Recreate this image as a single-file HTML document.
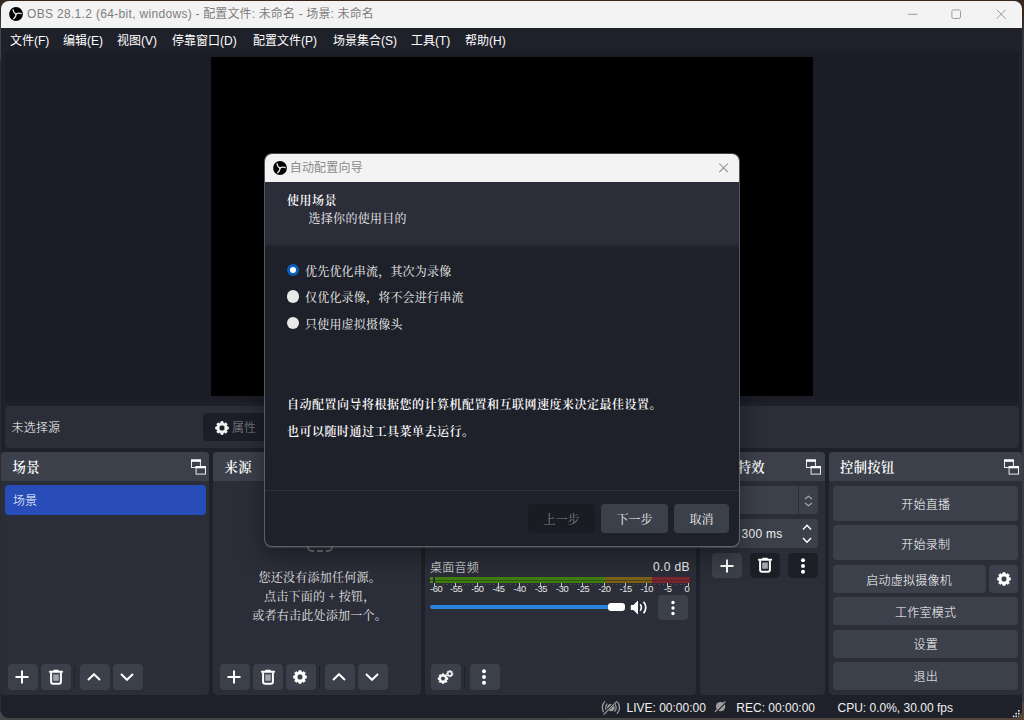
<!DOCTYPE html>
<html lang="zh-CN">
<head>
<meta charset="utf-8">
<title>OBS 28.1.2</title>
<style>
*{box-sizing:border-box;margin:0;padding:0}
html,body{width:1024px;height:720px;overflow:hidden;background:linear-gradient(to right,#464649 0%,#464649 55%,#57463a 100%)}
#bgt{position:absolute;left:0;top:0;width:1024px;height:12px;background:#38271d}
#bgl{position:absolute;left:0;top:12px;width:6px;height:700px;background:linear-gradient(to bottom,#38271d 0,#444446 16px,#444446 44px,#2b2c32 50px,#2b2c32 100%)}
#bgr{position:absolute;left:1016px;top:12px;width:8px;height:690px;background:linear-gradient(to bottom,#38271d 0,#3a3a40 30px,#3a3a40 100%)}
body{font-family:"Liberation Sans","Noto Sans CJK SC",sans-serif;font-size:12px;color:#fff;position:relative}
.abs{position:absolute}
.song{font-family:"Liberation Serif","Noto Serif CJK SC",serif}
#win{position:absolute;left:1px;top:1px;width:1021.2px;height:716.8px;border-radius:8px;background:#1f212a;overflow:hidden}
#central{position:absolute;left:4px;top:50px;width:1014px;height:351px;background:#1b1c26}
#titlebar{position:absolute;left:0;top:0;width:100%;height:27px;background:#f3f3f3;color:#7d7d7d}
#titlebar .t{position:absolute;left:26px;top:5px;font-size:12px;line-height:16px;white-space:nowrap;letter-spacing:.15px}
#titlebar .t i{font-style:normal;letter-spacing:.32px}
#menubar{position:absolute;left:0;top:27px;width:100%;height:23px;background:#1f212a}
#menubar span{position:absolute;top:5px;line-height:16px;font-size:12px;white-space:nowrap}
#preview{position:absolute;left:210px;top:56px;width:602px;height:339px;background:#000}
#srcbar{position:absolute;left:4px;top:405px;width:1014px;height:42px;background:#2b2e38;border-radius:4px}
.dock{position:absolute;top:451px;height:242.7px;background:#2b2e38;border-radius:4px;overflow:hidden}
.dock .hd{position:absolute;left:0;top:0;width:100%;height:29px;background:#3c404b}
.dock .hd b{position:absolute;left:11.5px;top:7px;font-size:13.33px;line-height:17px;font-weight:600;letter-spacing:.3px;white-space:nowrap}
.lt{font-weight:300}
.btn{position:absolute;background:#3c404b;border-radius:4px;text-align:center;font-size:12px;white-space:nowrap}
.ib{position:absolute;background:#3c404b;border-radius:4px;width:29.7px;height:25.8px;top:663.3px}
.sep{position:absolute;width:1.2px;background:#1f212a;top:666px;height:20px}
.ml{font-size:9.3px;line-height:10px;top:582.9px;color:#e6e6e6;letter-spacing:-.35px;white-space:nowrap}
#status{position:absolute;left:0;top:693.6px;width:100%;height:24px;background:#1f212a}
#status span{position:absolute;top:5px;line-height:16px;font-size:12px;white-space:nowrap;color:#f0f0f0}
#dlg{position:absolute;left:264px;top:153px;width:474px;height:392px;border-radius:7px;background:#1f212a;overflow:hidden;box-shadow:0 0 0 1px rgba(112,115,124,.6),0 1px 0 1px rgba(112,115,124,.35),0 8px 24px 2px rgba(0,0,0,.38)}
#dlg .rt{position:absolute;left:40px;font-size:12px;line-height:16px;letter-spacing:.2px;white-space:nowrap;color:#f2f2f2}
#dlg .bt{position:absolute;left:22px;font-size:12px;line-height:16px;font-weight:600;letter-spacing:.5px;white-space:nowrap}
.radio{position:absolute;left:21.6px;width:12.4px;height:12.4px;border-radius:50%;background:#e9e9e9}
.radio.on{background:#fff;border:3.7px solid #0a5fbd}
</style>
</head>
<body>
<div id="bgt"></div><div id="bgl"></div><div id="bgr"></div>
<div id="win">
  <div id="titlebar">
    <svg class="abs" style="left:7.8px;top:5.7px" width="14" height="14" viewBox="-7.0 -7.0 14 14"><circle cx="0" cy="0" r="6.9" fill="#000"/><g transform="scale(1.0)"><path d="M0.2,0.2 Q-2.9,-1.5 -2.9,-4.5" stroke="#e4e4e4" stroke-width="1.2" fill="none" stroke-linecap="round"/><g transform="rotate(120)"><path d="M0.2,0.2 Q-2.9,-1.5 -2.9,-4.5" stroke="#e4e4e4" stroke-width="1.2" fill="none" stroke-linecap="round"/></g><g transform="rotate(240)"><path d="M0.2,0.2 Q-2.9,-1.5 -2.9,-4.5" stroke="#e4e4e4" stroke-width="1.2" fill="none" stroke-linecap="round"/></g></g></svg>
    <div class="t"><i>OBS 28.1.2 (64-bit, windows)</i> - 配置文件: 未命名 - 场景: 未命名</div>
    <svg class="abs" style="left:906px;top:12px" width="12" height="3" viewBox="0 0 12 3"><path d="M1 1.3h9.4" stroke="#9c9c9c" stroke-width="1"/></svg>
    <svg class="abs" style="left:949px;top:7px" width="12" height="12" viewBox="0 0 12 12"><rect x="1.9" y="1.9" width="8.6" height="8.6" rx="1.6" fill="none" stroke="#9c9c9c" stroke-width="1"/></svg>
    <svg class="abs" style="left:994px;top:7px" width="12" height="12" viewBox="0 0 12 12"><path d="M1.6 1.6l9.2 9.2M10.8 1.6l-9.2 9.2" stroke="#9c9c9c" stroke-width="1"/></svg>
  </div>
  <div id="menubar">
    <span style="left:9px">文件(F)</span>
    <span style="left:62px">编辑(E)</span>
    <span style="left:116px">视图(V)</span>
    <span style="left:171px">停靠窗口(D)</span>
    <span style="left:252px">配置文件(P)</span>
    <span style="left:332px">场景集合(S)</span>
    <span style="left:410px">工具(T)</span>
    <span style="left:464px">帮助(H)</span>
  </div>
  <div id="central"></div>
  <div id="preview"></div>
  <div id="srcbar">
    <span class="abs lt" style="left:6.5px;top:14px;line-height:16px;letter-spacing:.2px">未选择源</span>
    <div class="abs" style="left:197.8px;top:7px;width:80px;height:28px;background:#1c1e27;border-radius:4px"></div>
    <svg class="abs" style="left:210px;top:14.8px" width="14" height="14" viewBox="0 0 14 14"><path fill="#f4f4f4" fill-rule="evenodd" stroke="#f4f4f4" stroke-width="0.6" stroke-linejoin="round" d="M5.61,1.91 L5.97,0.48 L8.03,0.48 L8.39,1.91 L9.62,2.41 L10.88,1.66 L12.34,3.12 L11.59,4.38 L12.09,5.61 L13.52,5.97 L13.52,8.03 L12.09,8.39 L11.59,9.62 L12.34,10.88 L10.88,12.34 L9.62,11.59 L8.39,12.09 L8.03,13.52 L5.97,13.52 L5.61,12.09 L4.38,11.59 L3.12,12.34 L1.66,10.88 L2.41,9.62 L1.91,8.39 L0.48,8.03 L0.48,5.97 L1.91,5.61 L2.41,4.38 L1.66,3.12 L3.12,1.66 L4.38,2.41Z M4.10,7.00 a2.90,2.90 0 1,0 5.80,0 a2.90,2.90 0 1,0 -5.80,0Z"/></svg>
    <span class="abs lt" style="left:227px;top:14px;line-height:16px;color:#8b8d93">属性</span>
  </div>

  <div class="dock" style="left:0px;width:208.4px"><div class="hd"><b class="song">场景</b><svg class="abs" style="left:190px;top:7.4px" width="16" height="17" viewBox="0 0 16 17"><rect x="0.5" y="1" width="8.9" height="7.5" fill="none" stroke="#ececee" stroke-width="1"/><rect x="0" y="0.5" width="9.9" height="2.3" fill="#fff"/><rect x="4.6" y="7.1" width="10.4" height="8.5" fill="#3c404b"/><rect x="5.1" y="7.6" width="9.4" height="7.5" fill="none" stroke="#ececee" stroke-width="1"/><rect x="4.6" y="7.1" width="10.4" height="2.2" fill="#fff"/></svg></div>
    <div class="abs" style="left:4px;top:32.8px;width:200.6px;height:30px;background:#284cb8;border-radius:4px"></div>
    <span class="abs lt" style="left:12px;top:41px;line-height:16px">场景</span>
  </div>
  <div class="dock" style="left:212px;width:207.5px"><div class="hd"><b class="song">来源</b></div>
    <div class="abs song" style="left:0;top:117.3px;width:100%;padding-left:6px;text-align:center;line-height:19px;font-size:12px;letter-spacing:.25px;color:#e4e4e4">您还没有添加任何源。<br>点击下面的 + 按钮，<br>或者右击此处添加一个。</div>
    <svg class="abs" style="left:94px;top:91px" width="26" height="10" viewBox="0 0 26 10"><path d="M1 1v3a4 4 0 0 0 4 4h2M25 1v3a4 4 0 0 1-4 4h-2M10 8h6" stroke="#8a8c92" stroke-width="1.4" fill="none"/></svg>
  </div>
  <div class="dock" style="left:423.8px;width:271.2px"><div class="hd"><b class="song">混音器</b></div></div>
  <div class="dock" style="left:699px;width:125px"><div class="hd"><b class="song" style="left:auto;right:60px">转场特效</b><svg class="abs" style="left:106px;top:7.4px" width="16" height="17" viewBox="0 0 16 17"><rect x="0.5" y="1" width="8.9" height="7.5" fill="none" stroke="#ececee" stroke-width="1"/><rect x="0" y="0.5" width="9.9" height="2.3" fill="#fff"/><rect x="4.6" y="7.1" width="10.4" height="8.5" fill="#3c404b"/><rect x="5.1" y="7.6" width="9.4" height="7.5" fill="none" stroke="#ececee" stroke-width="1"/><rect x="4.6" y="7.1" width="10.4" height="2.2" fill="#fff"/></svg></div>
    <div class="abs" style="left:4px;top:34.2px;width:114px;height:27.5px;background:#3c404b;border-radius:4px"></div>
    <div class="abs" style="left:98px;top:34.2px;width:1.2px;height:27.5px;background:#2b2e38"></div>
    <div class="abs" style="left:4px;top:67px;width:114px;height:29px;background:#3c404b;border-radius:4px"></div>
    <span class="abs" style="left:41.5px;top:74px;line-height:16px;font-size:12px;letter-spacing:.3px;color:#f0f0f0">300 ms</span>
    <svg class="abs" style="left:104px;top:43.3px" width="9" height="5" viewBox="0 0 9 5"><path d="M1 4L4.5 1.2L8 4" stroke="#a4a6ad" stroke-width="1.1" fill="none"/></svg><svg class="abs" style="left:104px;top:50px" width="9" height="5" viewBox="0 0 9 5"><path d="M1 1L4.5 3.8L8 1" stroke="#a4a6ad" stroke-width="1.1" fill="none"/></svg>
    <svg class="abs" style="left:102px;top:72px" width="10" height="6.5" viewBox="0 0 10 6.5"><path d="M1 5.5L5.0 1.2L9 5.5" stroke="#fff" stroke-width="1.4" fill="none"/></svg><svg class="abs" style="left:102px;top:85px" width="10" height="6.5" viewBox="0 0 10 6.5"><path d="M1 1L5.0 5.3L9 1" stroke="#fff" stroke-width="1.4" fill="none"/></svg>
    <div class="abs" style="left:11.7px;top:101.4px;width:30.3px;height:24.5px;background:#3c404b;border-radius:4px"></div>
    <div class="abs" style="left:49.9px;top:101.4px;width:29.8px;height:24.5px;background:#1d1f27;border-radius:4px"></div>
    <div class="abs" style="left:87.6px;top:101.4px;width:30.4px;height:24.5px;background:#1d1f27;border-radius:4px"></div>
    <svg class="abs" style="left:20px;top:106.7px" width="14" height="14" viewBox="0 0 14 14"><path d="M7 0.5v13M0.5 7h13" stroke="#fff" stroke-width="2" fill="none"/></svg><svg class="abs" style="left:57px;top:104.6px" width="16" height="17" viewBox="0 0 16 17"><path d="M1.8 2.75h12.4" stroke="#fff" stroke-width="1.9" stroke-linecap="round" fill="none"/><rect x="5.2" y="0.7" width="5.6" height="1.6" rx="0.8" fill="#fff"/><path d="M3.1 3.5v9.3a2 2 0 0 0 2 2h5.8a2 2 0 0 0 2-2v-9.3" stroke="#fff" stroke-width="2" fill="none"/><rect x="5.1" y="5.5" width="5.8" height="6.2" fill="#94969c"/><path d="M7 5.6v6.3M9 5.6v6.3" stroke="#b4b5ba" stroke-width="0.9"/></svg><svg class="abs" style="left:100px;top:104.7px" width="6" height="18" viewBox="0 0 6 18"><circle cx="3" cy="3.3" r="2.0" fill="#fff"/><circle cx="3" cy="9" r="2.0" fill="#fff"/><circle cx="3" cy="14.7" r="2.0" fill="#fff"/></svg>
  </div>
  <div class="dock" style="left:827.5px;width:193.5px"><div class="hd"><b class="song">控制按钮</b><svg class="abs" style="left:175.6px;top:7.4px" width="16" height="17" viewBox="0 0 16 17"><rect x="0.5" y="1" width="8.9" height="7.5" fill="none" stroke="#ececee" stroke-width="1"/><rect x="0" y="0.5" width="9.9" height="2.3" fill="#fff"/><rect x="4.6" y="7.1" width="10.4" height="8.5" fill="#3c404b"/><rect x="5.1" y="7.6" width="9.4" height="7.5" fill="none" stroke="#ececee" stroke-width="1"/><rect x="4.6" y="7.1" width="10.4" height="2.2" fill="#fff"/></svg></div></div>

  <!-- scenes buttons -->
  <div class="ib" style="left:7px"></div><div class="ib" style="left:40px"></div><div class="sep" style="left:72.8px"></div><div class="ib" style="left:79px"></div><div class="ib" style="left:112px"></div>
  <svg class="abs" style="left:14.3px;top:669.3px" width="14" height="14" viewBox="0 0 14 14"><path d="M7 0.5v13M0.5 7h13" stroke="#fff" stroke-width="2" fill="none"/></svg><svg class="abs" style="left:47.3px;top:667.6px" width="16" height="17" viewBox="0 0 16 17"><path d="M1.8 2.75h12.4" stroke="#fff" stroke-width="1.9" stroke-linecap="round" fill="none"/><rect x="5.2" y="0.7" width="5.6" height="1.6" rx="0.8" fill="#fff"/><path d="M3.1 3.5v9.3a2 2 0 0 0 2 2h5.8a2 2 0 0 0 2-2v-9.3" stroke="#fff" stroke-width="2" fill="none"/><rect x="5.1" y="5.5" width="5.8" height="6.2" fill="#94969c"/><path d="M7 5.6v6.3M9 5.6v6.3" stroke="#b4b5ba" stroke-width="0.9"/></svg><svg class="abs" style="left:86.3px;top:672.3px" width="14" height="8" viewBox="0 0 14 8"><path d="M1 7L7.0 1.2L13 7" stroke="#fff" stroke-width="2" fill="none"/></svg><svg class="abs" style="left:119.3px;top:671.8px" width="14" height="8" viewBox="0 0 14 8"><path d="M1 1L7.0 6.8L13 1" stroke="#fff" stroke-width="2" fill="none"/></svg>
  <!-- sources buttons -->
  <div class="ib" style="left:219px"></div><div class="ib" style="left:252px"></div><div class="ib" style="left:285px"></div><div class="sep" style="left:317.5px"></div><div class="ib" style="left:324px"></div><div class="ib" style="left:357px"></div>
  <svg class="abs" style="left:226.3px;top:669.3px" width="14" height="14" viewBox="0 0 14 14"><path d="M7 0.5v13M0.5 7h13" stroke="#fff" stroke-width="2" fill="none"/></svg><svg class="abs" style="left:259.3px;top:667.6px" width="16" height="17" viewBox="0 0 16 17"><path d="M1.8 2.75h12.4" stroke="#fff" stroke-width="1.9" stroke-linecap="round" fill="none"/><rect x="5.2" y="0.7" width="5.6" height="1.6" rx="0.8" fill="#fff"/><path d="M3.1 3.5v9.3a2 2 0 0 0 2 2h5.8a2 2 0 0 0 2-2v-9.3" stroke="#fff" stroke-width="2" fill="none"/><rect x="5.1" y="5.5" width="5.8" height="6.2" fill="#94969c"/><path d="M7 5.6v6.3M9 5.6v6.3" stroke="#b4b5ba" stroke-width="0.9"/></svg><svg class="abs" style="left:292.3px;top:669px" width="14" height="14" viewBox="0 0 14 14"><path fill="#fff" fill-rule="evenodd" stroke="#fff" stroke-width="0.6" stroke-linejoin="round" d="M5.59,1.83 L5.95,0.38 L8.05,0.38 L8.41,1.83 L9.66,2.34 L10.94,1.58 L12.42,3.06 L11.66,4.34 L12.17,5.59 L13.62,5.95 L13.62,8.05 L12.17,8.41 L11.66,9.66 L12.42,10.94 L10.94,12.42 L9.66,11.66 L8.41,12.17 L8.05,13.62 L5.95,13.62 L5.59,12.17 L4.34,11.66 L3.06,12.42 L1.58,10.94 L2.34,9.66 L1.83,8.41 L0.38,8.05 L0.38,5.95 L1.83,5.59 L2.34,4.34 L1.58,3.06 L3.06,1.58 L4.34,2.34Z M4.10,7.00 a2.90,2.90 0 1,0 5.80,0 a2.90,2.90 0 1,0 -5.80,0Z"/></svg><svg class="abs" style="left:331.3px;top:672.3px" width="14" height="8" viewBox="0 0 14 8"><path d="M1 7L7.0 1.2L13 7" stroke="#fff" stroke-width="2" fill="none"/></svg><svg class="abs" style="left:364.3px;top:671.8px" width="14" height="8" viewBox="0 0 14 8"><path d="M1 1L7.0 6.8L13 1" stroke="#fff" stroke-width="2" fill="none"/></svg>
  <!-- mixer -->
  <span class="abs lt" style="left:429px;top:558.5px;line-height:16px;letter-spacing:.25px;color:#f0f0f0">桌面音频</span>
  <span class="abs" style="left:630px;width:59px;text-align:right;top:557.5px;line-height:16px;letter-spacing:.4px;color:#f0f0f0">0.0 dB</span>
  <div class="abs" style="left:429.2px;top:575.5px;width:2.8px;height:6.5px;background:linear-gradient(to bottom,#4a8a14 0,#4a8a14 2.6px,#2c4d1c 2.6px,#2c4d1c 3.9px,#4a8a14 3.9px,#4a8a14 6.5px)"></div>
<div class="abs" style="left:433.7px;top:575.5px;width:170.5px;height:6.5px;background:linear-gradient(to bottom,#417c0e 0,#417c0e 2.6px,#2f5a19 2.6px,#2f5a19 3.9px,#417c0e 3.9px,#417c0e 6.5px)"></div>
<div class="abs" style="left:604.2px;top:575.5px;width:46.8px;height:6.5px;background:linear-gradient(to bottom,#7a6114 0,#7a6114 2.6px,#4f4224 2.6px,#4f4224 3.9px,#7a6114 3.9px,#7a6114 6.5px)"></div>
<div class="abs" style="left:651.0px;top:575.5px;width:38.3px;height:6.5px;background:linear-gradient(to bottom,#7d2630 0,#7d2630 2.6px,#50252f 2.6px,#50252f 3.9px,#7d2630 3.9px,#7d2630 6.5px)"></div>
<div class="abs" style="left:433.1px;top:582px;width:1px;height:2.6px;background:#c4c4c4"></div>
<div class="abs" style="left:437.3px;top:582.5px;width:1px;height:1px;background:#555862"></div>
<div class="abs" style="left:441.6px;top:582.5px;width:1px;height:1px;background:#555862"></div>
<div class="abs" style="left:445.8px;top:582.5px;width:1px;height:1px;background:#555862"></div>
<div class="abs" style="left:450.0px;top:582.5px;width:1px;height:1px;background:#555862"></div>
<div class="abs" style="left:454.3px;top:582px;width:1px;height:2.6px;background:#c4c4c4"></div>
<div class="abs" style="left:458.5px;top:582.5px;width:1px;height:1px;background:#555862"></div>
<div class="abs" style="left:462.7px;top:582.5px;width:1px;height:1px;background:#555862"></div>
<div class="abs" style="left:467.0px;top:582.5px;width:1px;height:1px;background:#555862"></div>
<div class="abs" style="left:471.2px;top:582.5px;width:1px;height:1px;background:#555862"></div>
<div class="abs" style="left:475.5px;top:582px;width:1px;height:2.6px;background:#c4c4c4"></div>
<div class="abs" style="left:479.7px;top:582.5px;width:1px;height:1px;background:#555862"></div>
<div class="abs" style="left:483.9px;top:582.5px;width:1px;height:1px;background:#555862"></div>
<div class="abs" style="left:488.2px;top:582.5px;width:1px;height:1px;background:#555862"></div>
<div class="abs" style="left:492.4px;top:582.5px;width:1px;height:1px;background:#555862"></div>
<div class="abs" style="left:496.6px;top:582px;width:1px;height:2.6px;background:#c4c4c4"></div>
<div class="abs" style="left:500.9px;top:582.5px;width:1px;height:1px;background:#555862"></div>
<div class="abs" style="left:505.1px;top:582.5px;width:1px;height:1px;background:#555862"></div>
<div class="abs" style="left:509.3px;top:582.5px;width:1px;height:1px;background:#555862"></div>
<div class="abs" style="left:513.6px;top:582.5px;width:1px;height:1px;background:#555862"></div>
<div class="abs" style="left:517.8px;top:582px;width:1px;height:2.6px;background:#c4c4c4"></div>
<div class="abs" style="left:522.0px;top:582.5px;width:1px;height:1px;background:#555862"></div>
<div class="abs" style="left:526.3px;top:582.5px;width:1px;height:1px;background:#555862"></div>
<div class="abs" style="left:530.5px;top:582.5px;width:1px;height:1px;background:#555862"></div>
<div class="abs" style="left:534.7px;top:582.5px;width:1px;height:1px;background:#555862"></div>
<div class="abs" style="left:539.0px;top:582px;width:1px;height:2.6px;background:#c4c4c4"></div>
<div class="abs" style="left:543.2px;top:582.5px;width:1px;height:1px;background:#555862"></div>
<div class="abs" style="left:547.4px;top:582.5px;width:1px;height:1px;background:#555862"></div>
<div class="abs" style="left:551.7px;top:582.5px;width:1px;height:1px;background:#555862"></div>
<div class="abs" style="left:555.9px;top:582.5px;width:1px;height:1px;background:#555862"></div>
<div class="abs" style="left:560.2px;top:582px;width:1px;height:2.6px;background:#c4c4c4"></div>
<div class="abs" style="left:564.4px;top:582.5px;width:1px;height:1px;background:#555862"></div>
<div class="abs" style="left:568.6px;top:582.5px;width:1px;height:1px;background:#555862"></div>
<div class="abs" style="left:572.9px;top:582.5px;width:1px;height:1px;background:#555862"></div>
<div class="abs" style="left:577.1px;top:582.5px;width:1px;height:1px;background:#555862"></div>
<div class="abs" style="left:581.3px;top:582px;width:1px;height:2.6px;background:#c4c4c4"></div>
<div class="abs" style="left:585.6px;top:582.5px;width:1px;height:1px;background:#555862"></div>
<div class="abs" style="left:589.8px;top:582.5px;width:1px;height:1px;background:#555862"></div>
<div class="abs" style="left:594.0px;top:582.5px;width:1px;height:1px;background:#555862"></div>
<div class="abs" style="left:598.3px;top:582.5px;width:1px;height:1px;background:#555862"></div>
<div class="abs" style="left:602.5px;top:582px;width:1px;height:2.6px;background:#c4c4c4"></div>
<div class="abs" style="left:606.7px;top:582.5px;width:1px;height:1px;background:#555862"></div>
<div class="abs" style="left:611.0px;top:582.5px;width:1px;height:1px;background:#555862"></div>
<div class="abs" style="left:615.2px;top:582.5px;width:1px;height:1px;background:#555862"></div>
<div class="abs" style="left:619.4px;top:582.5px;width:1px;height:1px;background:#555862"></div>
<div class="abs" style="left:623.7px;top:582px;width:1px;height:2.6px;background:#c4c4c4"></div>
<div class="abs" style="left:627.9px;top:582.5px;width:1px;height:1px;background:#555862"></div>
<div class="abs" style="left:632.1px;top:582.5px;width:1px;height:1px;background:#555862"></div>
<div class="abs" style="left:636.4px;top:582.5px;width:1px;height:1px;background:#555862"></div>
<div class="abs" style="left:640.6px;top:582.5px;width:1px;height:1px;background:#555862"></div>
<div class="abs" style="left:644.9px;top:582px;width:1px;height:2.6px;background:#c4c4c4"></div>
<div class="abs" style="left:649.1px;top:582.5px;width:1px;height:1px;background:#555862"></div>
<div class="abs" style="left:653.3px;top:582.5px;width:1px;height:1px;background:#555862"></div>
<div class="abs" style="left:657.6px;top:582.5px;width:1px;height:1px;background:#555862"></div>
<div class="abs" style="left:661.8px;top:582.5px;width:1px;height:1px;background:#555862"></div>
<div class="abs" style="left:666.0px;top:582px;width:1px;height:2.6px;background:#c4c4c4"></div>
<div class="abs" style="left:670.3px;top:582.5px;width:1px;height:1px;background:#555862"></div>
<div class="abs" style="left:674.5px;top:582.5px;width:1px;height:1px;background:#555862"></div>
<div class="abs" style="left:678.7px;top:582.5px;width:1px;height:1px;background:#555862"></div>
<div class="abs" style="left:683.0px;top:582.5px;width:1px;height:1px;background:#555862"></div>
<div class="abs" style="left:687.2px;top:582px;width:1px;height:2.6px;background:#c4c4c4"></div>
<span class="abs ml" style="left:429px">-60</span>
<span class="abs ml" style="left:445.2px;width:20px;text-align:center">-55</span>
<span class="abs ml" style="left:466.4px;width:20px;text-align:center">-50</span>
<span class="abs ml" style="left:487.5px;width:20px;text-align:center">-45</span>
<span class="abs ml" style="left:508.7px;width:20px;text-align:center">-40</span>
<span class="abs ml" style="left:529.9px;width:20px;text-align:center">-35</span>
<span class="abs ml" style="left:551.1px;width:20px;text-align:center">-30</span>
<span class="abs ml" style="left:572.2px;width:20px;text-align:center">-25</span>
<span class="abs ml" style="left:593.4px;width:20px;text-align:center">-20</span>
<span class="abs ml" style="left:614.6px;width:20px;text-align:center">-15</span>
<span class="abs ml" style="left:635.8px;width:20px;text-align:center">-10</span>
<span class="abs ml" style="left:656.9px;width:20px;text-align:center">-5</span>
<span class="abs ml" style="left:675.3px;width:13px;text-align:right">0</span>
  <div class="abs" style="left:429.3px;top:604px;width:185px;height:4px;border-radius:2px;background:#2b83dc"></div>
  <div class="abs" style="left:606.8px;top:601.5px;width:17.3px;height:8.7px;border-radius:3px;background:#fff"></div>
  <svg class="abs" style="left:629px;top:597.7px" width="18" height="17" viewBox="0 0 18 17"><path d="M0.8 6h2.6L8 1.5v14L3.4 11H0.8z" fill="#fff"/><path d="M10.2 5.3Q12.6 8.5 10.2 11.7" stroke="#fff" stroke-width="1.6" fill="none"/><path d="M13.6 2.8Q18 8.5 13.6 14.2" stroke="#fff" stroke-width="1.7" fill="none"/></svg>
  <div class="abs" style="left:657.3px;top:594.4px;width:29.7px;height:24.6px;background:#3c404b;border-radius:4px"></div>
  <svg class="abs" style="left:669px;top:597.7px" width="6" height="18" viewBox="0 0 6 18"><circle cx="3" cy="3.5" r="1.7" fill="#fff"/><circle cx="3" cy="9" r="1.7" fill="#fff"/><circle cx="3" cy="14.5" r="1.7" fill="#fff"/></svg>
  <div class="ib" style="left:430px"></div><div class="sep" style="left:462.7px"></div><div class="ib" style="left:469px"></div>
  <svg class="abs" style="left:434px;top:666px" width="22" height="22" viewBox="0 0 22 22"><path fill="#fff" fill-rule="evenodd" stroke="#fff" stroke-width="0.6" stroke-linejoin="round" d="M6.94,7.74 L7.22,6.66 L8.78,6.66 L9.06,7.74 L9.98,8.13 L10.94,7.55 L12.05,8.66 L11.47,9.62 L11.86,10.54 L12.94,10.82 L12.94,12.38 L11.86,12.66 L11.47,13.58 L12.05,14.54 L10.94,15.65 L9.98,15.07 L9.06,15.46 L8.78,16.54 L7.22,16.54 L6.94,15.46 L6.02,15.07 L5.06,15.65 L3.95,14.54 L4.53,13.58 L4.14,12.66 L3.06,12.38 L3.06,10.82 L4.14,10.54 L4.53,9.62 L3.95,8.66 L5.06,7.55 L6.02,8.13Z M5.70,11.60 a2.30,2.30 0 1,0 4.60,0 a2.30,2.30 0 1,0 -4.60,0Z"/><path fill="#fff" fill-rule="evenodd" stroke="#fff" stroke-width="0.6" stroke-linejoin="round" d="M14.12,4.23 L14.30,3.54 L15.30,3.54 L15.48,4.23 L16.07,4.48 L16.68,4.11 L17.39,4.82 L17.02,5.43 L17.27,6.02 L17.96,6.20 L17.96,7.20 L17.27,7.38 L17.02,7.97 L17.39,8.58 L16.68,9.29 L16.07,8.92 L15.48,9.17 L15.30,9.86 L14.30,9.86 L14.12,9.17 L13.53,8.92 L12.92,9.29 L12.21,8.58 L12.58,7.97 L12.33,7.38 L11.64,7.20 L11.64,6.20 L12.33,6.02 L12.58,5.43 L12.21,4.82 L12.92,4.11 L13.53,4.48Z M13.10,6.70 a1.70,1.70 0 1,0 3.40,0 a1.70,1.70 0 1,0 -3.40,0Z"/></svg>
  <svg class="abs" style="left:479.8px;top:667.2px" width="6" height="18" viewBox="0 0 6 18"><circle cx="3" cy="3.3" r="2.0" fill="#fff"/><circle cx="3" cy="9" r="2.0" fill="#fff"/><circle cx="3" cy="14.7" r="2.0" fill="#fff"/></svg>
  <!-- controls -->
  <div class="btn" style="left:832px;top:484.8px;width:185.3px;height:35.2px;line-height:35.2px"><span class="lt" style="letter-spacing:.25px;position:relative;top:2px">开始直播</span></div>
  <div class="btn" style="left:832px;top:524.3px;width:185.3px;height:35.2px;line-height:35.2px"><span class="lt" style="letter-spacing:.25px;position:relative;top:3px">开始录制</span></div>
  <div class="btn" style="left:832px;top:564px;width:152.5px;height:28px;line-height:28px"><span class="lt" style="letter-spacing:.25px;position:relative;top:2px">启动虚拟摄像机</span></div>
  <div class="btn" style="left:988px;top:564px;width:29.3px;height:28px"></div>
  <svg class="abs" style="left:995.6px;top:571.2px" width="14" height="14" viewBox="0 0 14 14"><path fill="#fff" fill-rule="evenodd" stroke="#fff" stroke-width="0.6" stroke-linejoin="round" d="M5.59,1.83 L5.95,0.38 L8.05,0.38 L8.41,1.83 L9.66,2.34 L10.94,1.58 L12.42,3.06 L11.66,4.34 L12.17,5.59 L13.62,5.95 L13.62,8.05 L12.17,8.41 L11.66,9.66 L12.42,10.94 L10.94,12.42 L9.66,11.66 L8.41,12.17 L8.05,13.62 L5.95,13.62 L5.59,12.17 L4.34,11.66 L3.06,12.42 L1.58,10.94 L2.34,9.66 L1.83,8.41 L0.38,8.05 L0.38,5.95 L1.83,5.59 L2.34,4.34 L1.58,3.06 L3.06,1.58 L4.34,2.34Z M4.10,7.00 a2.90,2.90 0 1,0 5.80,0 a2.90,2.90 0 1,0 -5.80,0Z"/></svg>
  <div class="btn" style="left:832px;top:596.3px;width:185.3px;height:28px;line-height:28px"><span class="lt" style="letter-spacing:.25px;position:relative;top:2px">工作室模式</span></div>
  <div class="btn" style="left:832px;top:628.7px;width:185.3px;height:28px;line-height:28px"><span class="lt" style="letter-spacing:.25px;position:relative;top:1px">设置</span></div>
  <div class="btn" style="left:832px;top:661px;width:185.3px;height:28px;line-height:28px"><span class="lt" style="letter-spacing:.25px;position:relative;top:1px">退出</span></div>

  <div id="status">
    <svg class="abs" style="left:599px;top:4px" width="22" height="17" viewBox="0 0 22 17">
      <g stroke="#9d9d9d" fill="none" stroke-width="1.3"><path d="M7.3 4.6a5.6 5.6 0 0 0 0 8M14.5 4.6a5.6 5.6 0 0 1 0 8M4.9 2.4a8.6 8.6 0 0 0 0 12.4M16.9 2.4a8.6 8.6 0 0 1 0 12.4"/></g>
      <circle cx="10.9" cy="8.6" r="3.7" fill="#9d9d9d"/><path d="M3.2 15.6L17.4 1.4" stroke="#1f212a" stroke-width="2.6"/><path d="M3.7 15.6L17.1 2.2" stroke="#9d9d9d" stroke-width="1.2"/></svg>
    <svg class="abs" style="left:712px;top:4.8px" width="15" height="15" viewBox="0 0 15 15"><circle cx="7.6" cy="7.6" r="4.7" fill="#9d9d9d"/><path d="M2.6 13.4L13.6 2.4" stroke="#1f212a" stroke-width="1.4"/><path d="M1.9 12.9L12.3 2.5" stroke="#9d9d9d" stroke-width="1.3"/></svg>
    <span style="left:625.5px">LIVE: 00:00:00</span>
    <span style="left:735.3px">REC: 00:00:00</span>
    <span style="left:836.5px">CPU: 0.0%, 30.00 fps</span>
    <svg class="abs" style="left:1010px;top:14px" width="10" height="10" viewBox="0 0 10 10" fill="#e8e8e8"><rect x="7" y="1" width="1.6" height="1.6"/><rect x="4.4" y="3.8" width="1.6" height="1.6"/><rect x="7" y="3.8" width="1.6" height="1.6"/><rect x="1.8" y="6.6" width="1.6" height="1.6"/><rect x="4.4" y="6.6" width="1.6" height="1.6"/><rect x="7" y="6.6" width="1.6" height="1.6"/></svg>
  </div>

  <div id="dlg">
    <div class="abs" style="left:0;top:0;width:100%;height:28.2px;background:#f3f3f3"></div>
    <svg class="abs" style="left:8px;top:7px" width="14" height="14" viewBox="-7.0 -7.0 14 14"><circle cx="0" cy="0" r="6.9" fill="#000"/><g transform="scale(1.0)"><path d="M0.2,0.2 Q-2.9,-1.5 -2.9,-4.5" stroke="#e4e4e4" stroke-width="1.2" fill="none" stroke-linecap="round"/><g transform="rotate(120)"><path d="M0.2,0.2 Q-2.9,-1.5 -2.9,-4.5" stroke="#e4e4e4" stroke-width="1.2" fill="none" stroke-linecap="round"/></g><g transform="rotate(240)"><path d="M0.2,0.2 Q-2.9,-1.5 -2.9,-4.5" stroke="#e4e4e4" stroke-width="1.2" fill="none" stroke-linecap="round"/></g></g></svg>
    <span class="abs" style="left:24.7px;top:6px;line-height:16px;font-size:12px;letter-spacing:.2px;color:#8a8a8a">自动配置向导</span>
    <svg class="abs" style="left:452px;top:8.2px" width="12" height="12" viewBox="0 0 12 12"><path d="M2.3 1.5l8.6 8.6M10.9 1.5l-8.6 8.6" stroke="#8a8a8a" stroke-width="1.05"/></svg>
    <div class="abs" style="left:0;top:28.2px;width:100%;height:63.3px;background:#2b2d39"></div>
    <div class="abs" style="left:0;top:91.5px;width:100%;height:1.2px;background:#262832"></div>
    <span class="bt song" style="top:38.5px">使用场景</span>
    <span class="abs song" style="left:43.5px;top:57.3px;line-height:16px;letter-spacing:.3px;color:#f2f2f2">选择你的使用目的</span>
    <div class="radio on" style="top:109.9px"></div><span class="rt song" style="top:109.5px">优先优化串流，其次为录像</span>
    <div class="radio" style="top:136.2px"></div><span class="rt song" style="top:136px">仅优化录像，将不会进行串流</span>
    <div class="radio" style="top:163px"></div><span class="rt song" style="top:162.6px">只使用虚拟摄像头</span>
    <span class="bt song" style="top:243px">自动配置向导将根据您的计算机配置和互联网速度来决定最佳设置。</span>
    <span class="bt song" style="top:270px">也可以随时通过工具菜单去运行。</span>
    <div class="abs" style="left:0;top:336px;width:100%;height:1px;background:#2e313a"></div>
    <div class="btn song" style="left:263px;top:350px;width:67px;height:29px;line-height:32px;background:#1a1c24;color:#7c7e85">上一步</div>
    <div class="btn song" style="left:336px;top:350px;width:67px;height:29px;line-height:32px;color:#f0f0f0">下一步</div>
    <div class="btn song" style="left:409px;top:350px;width:55px;height:29px;line-height:32px;color:#f0f0f0">取消</div>
  </div>
</div>
</body>
</html>
